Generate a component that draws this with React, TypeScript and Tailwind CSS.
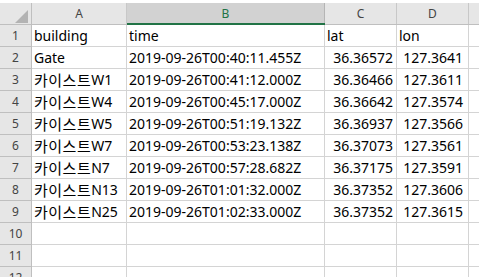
import React from "react";

const rows: [string, string, string, string][] = [
  ["building", "time", "lat", "lon"],
  ["Gate", "2019-09-26T00:40:11.455Z", "36.36572", "127.3641"],
  ["카이스트W1", "2019-09-26T00:41:12.000Z", "36.36466", "127.3611"],
  ["카이스트W4", "2019-09-26T00:45:17.000Z", "36.36642", "127.3574"],
  ["카이스트W5", "2019-09-26T00:51:19.132Z", "36.36937", "127.3566"],
  ["카이스트W7", "2019-09-26T00:53:23.138Z", "36.37073", "127.3561"],
  ["카이스트N7", "2019-09-26T00:57:28.682Z", "36.37175", "127.3591"],
  ["카이스트N13", "2019-09-26T01:01:32.000Z", "36.37352", "127.3606"],
  ["카이스트N25", "2019-09-26T01:02:33.000Z", "36.37352", "127.3615"],
  ["", "", "", ""],
  ["", "", "", ""],
  ["", "", "", ""],
];

const font = { fontFamily: '"Noto Sans", "Noto Sans CJK KR", sans-serif' };

function Building({ text }: { text: string }) {
  const m = text.match(/^(카이스트)(.*)$/);
  if (!m) return <>{text}</>;
  return (
    <>
      <span className="text-[15px] tracking-[0.5px]" style={{ fontFamily: '"Noto Sans CJK KR", sans-serif' }}>
        {m[1]}
      </span>
      <span>{m[2]}</span>
    </>
  );
}

export default function App() {
  return (
    <div className="w-[479px] h-[277px] overflow-hidden bg-white pt-[3px]" style={font}>
      {/* header row */}
      <div className="flex h-[22px] bg-[#e6e6e6] border-b border-[#bfbfbf] text-[12px] text-[#444]">
        <div className="relative w-[32px] shrink-0 border-r border-[#bfbfbf]">
          <svg className="absolute right-[3px] bottom-[1px]" width="13" height="13" viewBox="0 0 13 13">
            <polygon points="13,0 13,13 0,13" fill="#b3b3b3" />
          </svg>
        </div>
        <div className="w-[95px] shrink-0 border-r border-[#c8c8c8] flex items-center justify-center">A</div>
        <div className="relative w-[198px] shrink-0 border-r border-[#b5b5b5] bg-[#d2d2d2] flex items-center justify-center text-[#217346]">
          B
          <div className="absolute left-0 right-[-1px] bottom-[-1px] h-[2px] bg-[#217346]" />
        </div>
        <div className="w-[72px] shrink-0 border-r border-[#c8c8c8] flex items-center justify-center">C</div>
        <div className="w-[72px] shrink-0 border-r border-[#c8c8c8] flex items-center justify-center">D</div>
        <div className="flex-1" />
      </div>
      {rows.map((r, i) => (
        <div key={i} className="flex h-[22px] text-[14px] text-black">
          <div className="w-[32px] shrink-0 bg-[#e6e6e6] border-r border-b border-[#bfbfbf] flex items-center justify-center text-[12px] text-[#444] pt-[1px]">
            {i + 1}
          </div>
          <div className="w-[95px] shrink-0 border-r border-b border-[#d4d4d4] flex items-center pl-[2px] whitespace-nowrap overflow-hidden leading-none">
            <Building text={r[0]} />
          </div>
          <div className="w-[198px] shrink-0 border-r border-b border-[#d4d4d4] flex items-center pl-[2px] whitespace-nowrap leading-none">
            {r[1]}
          </div>
          <div className={`w-[72px] shrink-0 border-r border-b border-[#d4d4d4] flex items-center whitespace-nowrap leading-none ${i === 0 ? "pl-[2px]" : "justify-end pr-[3px]"}`}>
            {r[2]}
          </div>
          <div className={`w-[72px] shrink-0 border-r border-b border-[#d4d4d4] flex items-center whitespace-nowrap leading-none ${i === 0 ? "pl-[2px]" : "justify-end pr-[5px]"}`}>
            {r[3]}
          </div>
          <div className="flex-1 border-b border-[#d4d4d4]" />
        </div>
      ))}
    </div>
  );
}
